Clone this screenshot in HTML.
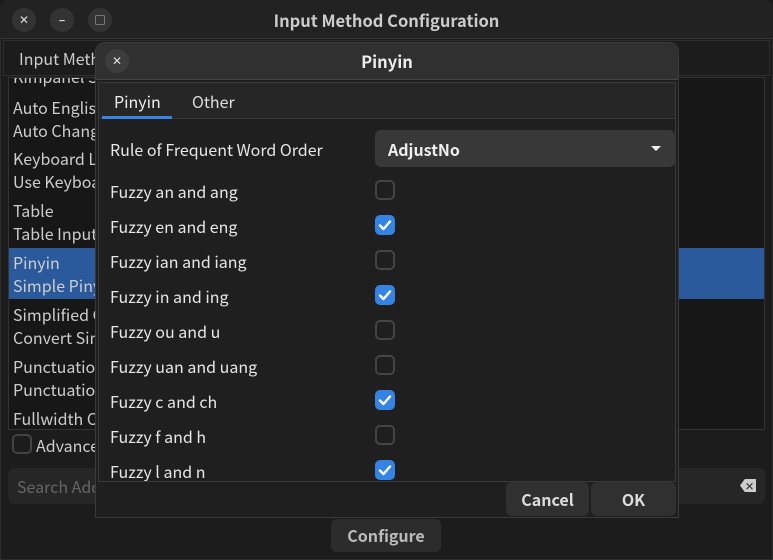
<!DOCTYPE html>
<html><head><style>
*{margin:0;padding:0;box-sizing:border-box}
body{width:773px;height:560px;background:#1b1b1b;font-family:"Noto Sans CJK SC","DejaVu Sans",sans-serif;color:#ddd;position:relative;overflow:hidden}
.abs{position:absolute}
.win{left:0;top:0;width:773px;height:560px;background:#1c1c1c;border-radius:10px 10px 0 0;border:1px solid #2c2c2c}
.tb{left:0;top:0;width:773px;height:39px;background:#222;border-bottom:1px solid #333;border-radius:10px 10px 0 0}
.cb{width:24px;height:24px;border-radius:12px;background:#333;color:#ddd;font-size:12px;text-align:center;line-height:24px;font-weight:bold}
.t{font-size:16px;line-height:20px;color:#ccc;white-space:nowrap}
.chk{width:20px;height:20px;border-radius:5px;border:2px solid #444;left:375px}
.on{background:#3584e4;border:none}
.lab{left:110px;font-size:16px;line-height:20px;color:#e6e6e6;white-space:nowrap}
.btn{background:#303030;border-radius:6px;color:#ddd;font-weight:bold;font-size:16px;text-align:center}
</style></head><body>
<div class="abs win"></div>
<div class="abs tb"></div>
<div class="abs cb" style="left:12px;top:8px">✕</div>
<div class="abs cb" style="left:50px;top:8px">–</div>
<div class="abs cb" style="left:88px;top:8px;font-size:10px">▢</div>
<div class="abs" style="left:0;width:773px;top:9px;line-height:22px;text-align:center;font-weight:bold;font-size:16.5px;color:#ccc">Input Method Configuration</div>
<div class="abs" style="left:3px;top:40px;width:767px;height:36px;background:#1c1c1c;border:1px solid #2e2e2e"></div>
<div class="abs t" style="left:19px;top:48px;font-size:16px">Input Method</div>
<div class="abs" style="left:8px;top:77px;width:757px;height:353px;background:#171717;border:1px solid #333;overflow:hidden">
<div class="abs" style="left:0;top:170px;width:756px;height:51px;background:#2a5a9c"></div>
<div class="abs t" style="left:4px;top:-12px">Kimpanel Support</div>
<div class="abs t" style="left:4px;top:19px">Auto English</div>
<div class="abs t" style="left:4px;top:42px">Auto Change</div>
<div class="abs t" style="left:4px;top:70px">Keyboard Layout</div>
<div class="abs t" style="left:4px;top:93px">Use Keyboard</div>
<div class="abs t" style="left:4px;top:122px">Table</div>
<div class="abs t" style="left:4px;top:145px">Table Input</div>
<div class="abs t" style="left:4px;top:174px">Pinyin</div>
<div class="abs t" style="left:4px;top:197px">Simple Pinyin</div>
<div class="abs t" style="left:4px;top:226px">Simplified Chinese</div>
<div class="abs t" style="left:4px;top:249px">Convert Simplified</div>
<div class="abs t" style="left:4px;top:278px">Punctuation</div>
<div class="abs t" style="left:4px;top:301px">Punctuation</div>
<div class="abs t" style="left:4px;top:330px">Fullwidth Character</div>
</div>
<div class="abs" style="left:12px;top:434px;width:20px;height:20px;border:2px solid #444;border-radius:5px"></div>
<div class="abs t" style="left:36px;top:435px">Advanced</div>
<div class="abs" style="left:8px;top:468px;width:757px;height:36px;background:#262626;border-radius:6px"></div>
<div class="abs t" style="left:17px;top:476px;color:#666">Search Addons</div>
<div class="abs" style="left:740px;top:479px;width:16px;height:13px;background:#ccc;clip-path:polygon(30% 0,100% 0,100% 100%,30% 100%,0 50%);color:#222;font-size:10px;text-align:center;line-height:13px;font-weight:bold;padding-left:3px">×</div>
<div class="abs btn" style="left:331px;top:519px;width:110px;height:33px;line-height:33px;background:#2c2c2c;color:#bbb">Configure</div>

<div class="abs" style="left:95px;top:42px;width:584px;height:476px;background:#1f1f1f;border:1px solid #3a3a3a;border-radius:10px 10px 0 0"></div>
<div class="abs" style="left:96px;top:43px;width:582px;height:37px;background:#303030;border-radius:9px 9px 0 0;border-bottom:1px solid #444"></div>
<div class="abs cb" style="left:105px;top:49px;background:#3d3d3d">✕</div>
<div class="abs" style="left:95px;width:584px;top:50px;line-height:22px;text-align:center;font-weight:bold;font-size:16.5px;color:#eee">Pinyin</div>
<div class="abs" style="left:98px;top:82px;width:578px;height:400px;border:1px solid #3a3a3a;background:#1f1f1f"></div>
<div class="abs" style="left:99px;top:83px;width:576px;height:36px;background:#262626;border-bottom:1px solid #3a3a3a"></div>
<div class="abs" style="left:102px;top:116px;width:70px;height:3px;background:#3584e4"></div>
<div class="abs t" style="left:114px;top:91px;color:#eee">Pinyin</div>
<div class="abs t" style="left:192px;top:91px;color:#ddd">Other</div>
<div class="abs lab" style="top:139px">Rule of Frequent Word Order</div>
<div class="abs" style="left:375px;top:130px;width:300px;height:37px;background:#383838;border-radius:6px"></div>
<div class="abs" style="left:388px;top:139px;line-height:20px;font-weight:bold;font-size:16px;color:#eee">AdjustNo</div>
<div class="abs" style="left:651px;top:146px;width:0;height:0;border-left:5px solid transparent;border-right:5px solid transparent;border-top:5px solid #eee"></div>

<div class="abs lab" style="top:181px">Fuzzy an and ang</div><div class="abs chk" style="top:180px"></div>
<div class="abs lab" style="top:216px">Fuzzy en and eng</div><div class="abs chk on" style="top:215px"></div>
<div class="abs lab" style="top:251px">Fuzzy ian and iang</div><div class="abs chk" style="top:250px"></div>
<div class="abs lab" style="top:286px">Fuzzy in and ing</div><div class="abs chk on" style="top:285px"></div>
<div class="abs lab" style="top:321px">Fuzzy ou and u</div><div class="abs chk" style="top:320px"></div>
<div class="abs lab" style="top:356px">Fuzzy uan and uang</div><div class="abs chk" style="top:355px"></div>
<div class="abs lab" style="top:391px">Fuzzy c and ch</div><div class="abs chk on" style="top:390px"></div>
<div class="abs lab" style="top:426px">Fuzzy f and h</div><div class="abs chk" style="top:425px"></div>
<div class="abs lab" style="top:461px;height:20px;overflow:hidden">Fuzzy l and n</div><div class="abs chk on" style="top:460px"></div>
<svg class="abs" style="left:0;top:0" width="773" height="560">
<g fill="none" stroke="#fff" stroke-width="2.4" stroke-linecap="round" stroke-linejoin="round">
<path d="M380 225.5l3.5 3.5 6.5-7.5"/><path d="M380 295.5l3.5 3.5 6.5-7.5"/><path d="M380 400.5l3.5 3.5 6.5-7.5"/><path d="M380 470.5l3.5 3.5 6.5-7.5"/>
</g></svg>
<div class="abs btn" style="left:506px;top:482px;width:83px;height:34px;line-height:34px">Cancel</div>
<div class="abs btn" style="left:591px;top:482px;width:85px;height:34px;line-height:34px">OK</div>
</body></html>
